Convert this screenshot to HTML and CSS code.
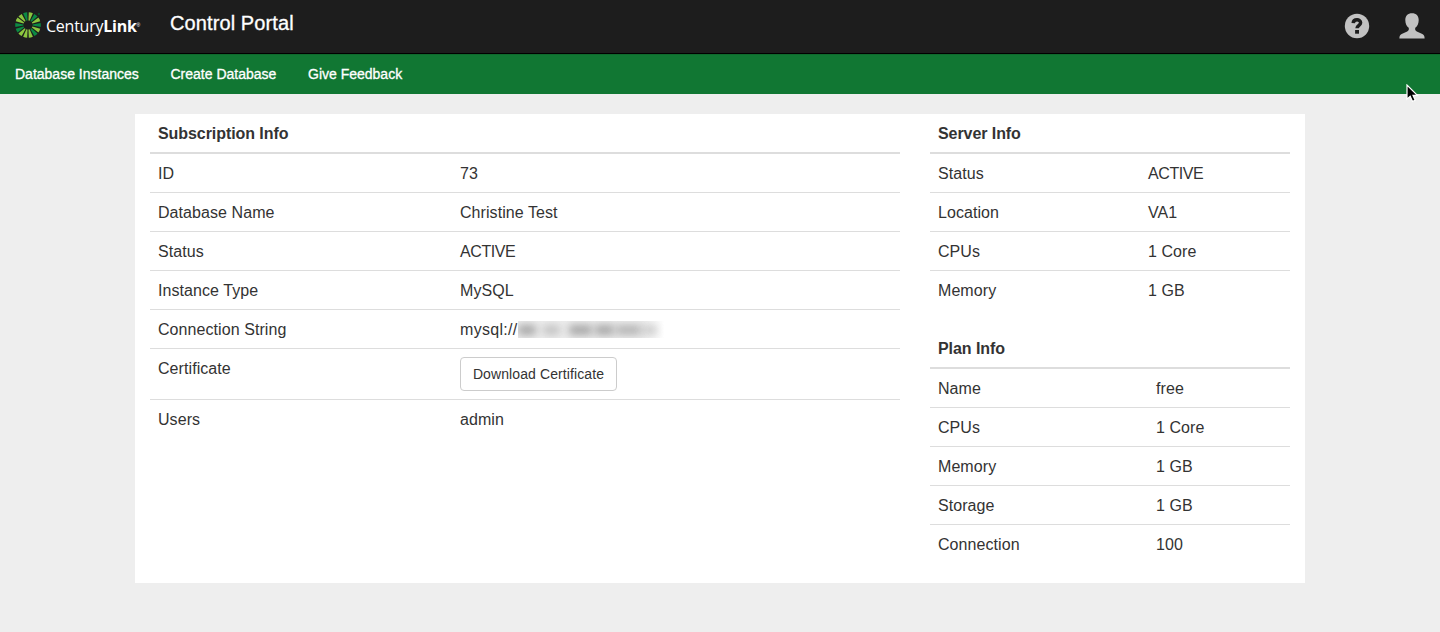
FILE: index.html
```html
<!DOCTYPE html>
<html lang="en">
<head>
<meta charset="utf-8">
<title>Control Portal</title>
<link rel="stylesheet" href="styles.css">
</head>
<body>
<header class="topbar">
  <a class="brand">
    <svg class="brand-mark" width="28" height="28" viewBox="-14 -14 28 28">
      <defs><path id="ray" d="M-.6-4.6L-2.1-12.6Q0-13 2.1-12.6L.6-4.6Z"/></defs>
      <g fill="#8cc63f">
        <use href="#ray" transform="rotate(13)"/><use href="#ray" transform="rotate(64)"/><use href="#ray" transform="rotate(116)"/><use href="#ray" transform="rotate(167)"/><use href="#ray" transform="rotate(193)"/><use href="#ray" transform="rotate(219)"/><use href="#ray" transform="rotate(296)"/><use href="#ray" transform="rotate(321)"/>
      </g>
      <g fill="#0b8a43">
        <use href="#ray" transform="rotate(39)"/><use href="#ray" transform="rotate(90)"/><use href="#ray" transform="rotate(141)"/><use href="#ray" transform="rotate(244)"/><use href="#ray" transform="rotate(270)"/><use href="#ray" transform="rotate(347)"/>
      </g>
      <circle cx="10.9" cy="-11" r="1.2" fill="#0b4a2a"/>
    </svg>
    <span class="brand-name">Century<b>Link</b></span><span class="reg">®</span>
  </a>
  <h1 class="title">Control Portal</h1>
  <div class="actions">
    <svg width="26" height="26" viewBox="0 0 26 26">
      <circle cx="13" cy="13" r="12.2" fill="#c2c2c2"/>
      <path d="M9.2 10.2C9.5 5.8 16.6 5.8 16.6 9.8C16.6 12.3 13 12.3 13 15.3" fill="none" stroke="#1d1d1d" stroke-width="3.5"/>
      <rect x="11.1" y="17" width="3.9" height="3.7" fill="#1d1d1d"/>
    </svg>
    <svg width="26" height="26" viewBox="0 0 26 26">
      <path d="M13 .2C8.8.2 6.3 2.8 6.3 7C6.3 10.7 7.6 13.4 9.7 14.8C10.2 16.8 9.6 17.8 8.2 18.5L3.2 20.7C1.1 21.7.4 23 .4 25.4H25.6C25.6 23 24.9 21.7 22.8 20.7L17.8 18.5C16.4 17.8 15.8 16.8 16.3 14.8C18.4 13.4 19.7 10.7 19.7 7C19.7 2.8 17.2.2 13 .2Z" fill="#c2c2c2"/>
    </svg>
  </div>
</header>
<nav class="nav">
  <a class="n1">Database Instances</a><a class="n2">Create Database</a><a>Give Feedback</a>
</nav>
<main class="panel">
  <section class="subscription">
    <h2>Subscription Info</h2>
    <dl>
      <div class="row"><dt>ID</dt><dd>73</dd></div>
      <div class="row"><dt>Database Name</dt><dd>Christine Test</dd></div>
      <div class="row"><dt>Status</dt><dd class="caps">ACTIVE</dd></div>
      <div class="row"><dt>Instance Type</dt><dd>MySQL</dd></div>
      <div class="row"><dt>Connection String</dt><dd class="conn"><span class="scheme">mysql://</span><span class="redacted"><i class="r1"></i><i class="r2"></i><i class="r3"></i><i class="r4"></i><i class="r5"></i><i class="r6"></i></span></dd></div>
      <div class="row tall"><dt>Certificate</dt><dd><button class="btn">Download Certificate</button></dd></div>
      <div class="row"><dt>Users</dt><dd>admin</dd></div>
    </dl>
  </section>
  <aside class="side">
    <section class="server">
      <h2>Server Info</h2>
      <dl>
        <div class="row"><dt>Status</dt><dd class="caps">ACTIVE</dd></div>
        <div class="row"><dt>Location</dt><dd>VA1</dd></div>
        <div class="row"><dt>CPUs</dt><dd>1 Core</dd></div>
        <div class="row"><dt>Memory</dt><dd>1 GB</dd></div>
      </dl>
    </section>
    <section class="plan">
      <h2>Plan Info</h2>
      <dl>
        <div class="row"><dt>Name</dt><dd>free</dd></div>
        <div class="row"><dt>CPUs</dt><dd>1 Core</dd></div>
        <div class="row"><dt>Memory</dt><dd>1 GB</dd></div>
        <div class="row"><dt>Storage</dt><dd>1 GB</dd></div>
        <div class="row"><dt>Connection</dt><dd>100</dd></div>
      </dl>
    </section>
  </aside>
</main>
<svg class="cursor" width="14" height="20" viewBox="0 0 14 20">
  <path d="M1 1V15.2L4.2 12.3L6.5 17.4L9.2 16.2L7 11.3H11.4Z" fill="#000" stroke="#fff" stroke-width="1.2"/>
</svg>
</body>
</html>
```

FILE: styles.css
```css
* { box-sizing: border-box; }
body {
  margin: 0;
  min-height: 632px;
  background: #eee;
  color: #333;
  font: 16px/22px "Liberation Sans", Arial, sans-serif;
}
.topbar {
  display: flex;
  height: 54px;
  padding: 0 15px;
  background: #1d1d1d;
  border-bottom: 1px solid #000;
}
.brand { display: flex; width: 155px; color: #fff; }
.brand-mark { margin: 11px 0 0 -1px; flex: none; }
.brand-name {
  margin: 15px 0 0 4px;
  font: 16px/22px "Open Sans", sans-serif;
  letter-spacing: -0.25px;
}
.brand-name b { font-weight: 700; }
.reg { font-size: 5px; line-height: 8px; margin-top: 21px; }
.title {
  margin: 12px 0 0;
  color: #fff;
  font-size: 20px;
  font-weight: 400;
  line-height: 22px;
  letter-spacing: 0.1px;
  -webkit-text-stroke: 0.3px #fff;
}
.actions { display: flex; gap: 29px; margin: 13px 0 0 auto; }
.nav {
  display: flex;
  height: 40px;
  padding: 0 15px;
  background: #117733;
  border-top: 1px solid #0f6a2d;
  color: #fff;
  font-size: 14px;
  line-height: 39px;
  -webkit-text-stroke: 0.3px #fff;
}
.n1 { width: 155.5px; }
.n2 { width: 137.5px; }
.panel {
  display: flex;
  gap: 30px;
  width: 1170px;
  height: 469px;
  margin: 20px auto 0;
  padding: 0 15px;
  background: #fff;
}
.subscription { width: 750px; }
.side { width: 360px; }
h2 {
  margin: 0;
  height: 40px;
  padding: 9px 8px 7px;
  border-bottom: 2px solid #ddd;
  font-size: 16px;
  line-height: 22px;
  font-weight: 700;
  letter-spacing: -0.07px;
}
dl, dd { margin: 0; }
.row {
  display: grid;
  grid-template-columns: 302px 1fr;
  height: 39px;
  padding: 9px 8px 0;
  border-top: 1px solid #ddd;
  letter-spacing: 0.07px;
}
.row:first-child { height: 38px; border-top: 0; }
.row.tall { height: 51px; }
.caps { letter-spacing: -0.4px; }
.server .row { grid-template-columns: 210px 1fr; }
.plan .row { grid-template-columns: 218px 1fr; }
.plan { margin-top: 20px; }
.conn { display: flex; }
.scheme { width: 58px; letter-spacing: 0.3px; }
.redacted {
  display: flex;
  align-items: center;
  width: 146px;
  height: 17px;
  margin-top: 2px;
  overflow: hidden;
  background: linear-gradient(90deg, #eee 85%, #fff);
}
.redacted i { height: 10px; flex: none; background: #a4a4a4; filter: blur(4px); }
.r1 { width: 18px; margin-right: 7px; }
.r2 { width: 17px; margin-right: 9px; opacity: 0.6; }
.r3 { width: 23px; margin-right: 3px; }
.r4 { width: 19px; margin-right: 2px; }
.r5 { width: 25px; margin-right: 2px; opacity: 0.8; }
.r6 { width: 14px; opacity: 0.5; }
.btn {
  display: block;
  width: 157px;
  height: 34px;
  margin-top: -1px;
  padding: 0;
  border: 1px solid #ccc;
  border-radius: 4px;
  background: #fff;
  color: #333;
  font: 14px/20px "Liberation Sans", Arial, sans-serif;
  letter-spacing: 0.1px;
}
.cursor { position: absolute; left: 1406px; top: 84px; }
```
